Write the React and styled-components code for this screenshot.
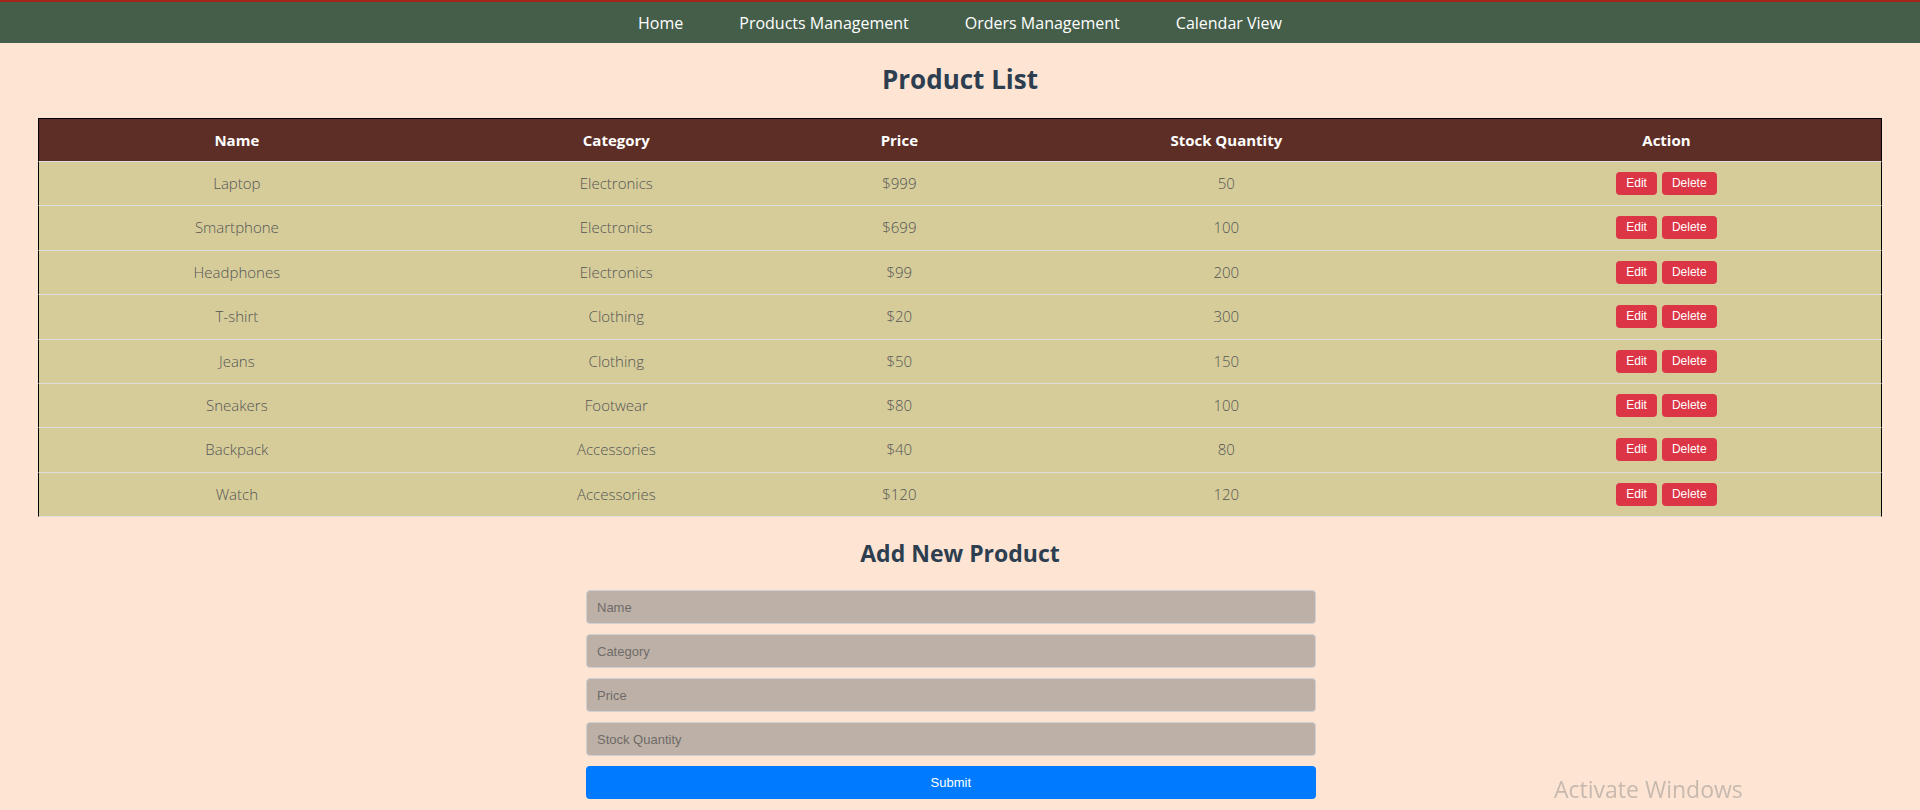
import React, { useState } from 'react';
import styled, { createGlobalStyle } from 'styled-components';

const initialProducts = [
  { id: 1, name: 'Laptop', category: 'Electronics', price: 999, stock: 50 },
  { id: 2, name: 'Smartphone', category: 'Electronics', price: 699, stock: 100 },
  { id: 3, name: 'Headphones', category: 'Electronics', price: 99, stock: 200 },
  { id: 4, name: 'T-shirt', category: 'Clothing', price: 20, stock: 300 },
  { id: 5, name: 'Jeans', category: 'Clothing', price: 50, stock: 150 },
  { id: 6, name: 'Sneakers', category: 'Footwear', price: 80, stock: 100 },
  { id: 7, name: 'Backpack', category: 'Accessories', price: 40, stock: 80 },
  { id: 8, name: 'Watch', category: 'Accessories', price: 120, stock: 120 },
];

const links = ['Home', 'Products Management', 'Orders Management', 'Calendar View'];

const App = () => {
  const [products, setProducts] = useState(initialProducts);
  const [form, setForm] = useState({ name: '', category: '', price: '', stock: '' });

  const onChange = (e) => setForm({ ...form, [e.target.name]: e.target.value });

  const onSubmit = (e) => {
    e.preventDefault();
    if (!form.name) return;
    setProducts([...products, { ...form, id: Date.now() }]);
    setForm({ name: '', category: '', price: '', stock: '' });
  };

  const remove = (id) => setProducts(products.filter((p) => p.id !== id));

  return (
    <>
      <GlobalStyle />
      <Nav>
        {links.map((l) => (
          <NavLink key={l} href="#">
            {l}
          </NavLink>
        ))}
      </Nav>
      <Main>
        <Title>Product List</Title>
        <Table>
          <colgroup>
            <col style={{ width: '21.48%' }} />
            <col style={{ width: '19.75%' }} />
            <col style={{ width: '10.96%' }} />
            <col style={{ width: '24.52%' }} />
            <col />
          </colgroup>
          <thead>
            <tr>
              <Th>Name</Th>
              <Th>Category</Th>
              <Th>Price</Th>
              <Th>Stock Quantity</Th>
              <Th>Action</Th>
            </tr>
          </thead>
          <tbody>
            {products.map((p) => (
              <tr key={p.id}>
                <Td>{p.name}</Td>
                <Td>{p.category}</Td>
                <Td>${p.price}</Td>
                <Td>{p.stock}</Td>
                <Td>
                  <Actions>
                    <SmallButton>Edit</SmallButton>
                    <SmallButton onClick={() => remove(p.id)}>Delete</SmallButton>
                  </Actions>
                </Td>
              </tr>
            ))}
          </tbody>
        </Table>

        <SubTitle>Add New Product</SubTitle>
        <Form onSubmit={onSubmit}>
          <Input name="name" placeholder="Name" value={form.name} onChange={onChange} />
          <Input name="category" placeholder="Category" value={form.category} onChange={onChange} />
          <Input name="price" placeholder="Price" value={form.price} onChange={onChange} />
          <Input name="stock" placeholder="Stock Quantity" value={form.stock} onChange={onChange} />
          <SubmitButton type="submit">Submit</SubmitButton>
        </Form>
      </Main>
      <Watermark>Activate Windows</Watermark>
    </>
  );
};
export default App;

const GlobalStyle = createGlobalStyle`
  body {
    margin: 0;
    background: #fde4d3;
    font-family: 'Open Sans', 'Liberation Sans', sans-serif;
  }
`;

const Nav = styled.nav`
  display: flex;
  justify-content: center;
  align-items: center;
  gap: 56px;
  height: 41px;
  border-top: 2px solid #a3251c;
  background: #455e4a;
`;

const NavLink = styled.a`
  color: #ffffff;
  text-decoration: none;
  font-size: 16px;
  line-height: 20px;
`;

const Main = styled.main`
  display: flex;
  flex-direction: column;
  align-items: center;
  padding-top: 20px;
`;

const Title = styled.h2`
  margin: 0 0 23px;
  font-size: 26px;
  line-height: 32px;
  font-weight: 700;
  color: #2c3e50;
`;

const Table = styled.table`
  width: 96%;
  table-layout: fixed;
  border-collapse: separate;
  border-spacing: 0;
  text-align: center;
`;

const Th = styled.th`
  padding: 10px 8px;
  line-height: 22px;
  font-size: 15px;
  font-weight: 700;
  color: #ffffff;
  background: #5d2e25;
  border-top: 1px solid #000;
  border-bottom: 1px solid #ddd;
  &:first-child {
    border-left: 1px solid #000;
  }
  &:last-child {
    border-right: 1px solid #000;
  }
`;

const Td = styled.td`
  padding: 10px 8px;
  line-height: 23.4px;
  font-size: 15px;
  font-weight: 300;
  color: #555;
  background: #d5cc9a;
  border-bottom: 1px solid #ddd;
  &:first-child {
    border-left: 1px solid #000;
  }
  &:last-child {
    border-right: 1px solid #000;
  }
`;

const Actions = styled.div`
  display: inline-flex;
  gap: 5px;
  vertical-align: top;
`;

const SmallButton = styled.button`
  padding: 5px 10px;
  border: none;
  border-radius: 4px;
  background: #dc3545;
  color: #fff;
  font-family: 'Liberation Sans', Arial, sans-serif;
  font-size: 12px;
  line-height: 13px;
  cursor: pointer;
`;

const SubTitle = styled.h3`
  margin: 22px 0 23px;
  font-size: 23px;
  line-height: 28px;
  font-weight: 700;
  color: #2c3e50;
`;

const Form = styled.form`
  width: 40%;
  display: flex;
  flex-direction: column;
  gap: 10px;
`;

const Input = styled.input`
  box-sizing: border-box;
  width: 95%;
  height: 34px;
  margin-left: 10px;
  padding: 0 10px;
  border: 1px solid #cfcfd4;
  border-radius: 4px;
  background: #bdb1a7;
  font-family: 'Liberation Sans', Arial, sans-serif;
  font-size: 13px;
  color: #333;
  &::placeholder {
    color: #6f6b68;
  }
`;

const SubmitButton = styled.button`
  box-sizing: border-box;
  width: 95%;
  height: 33px;
  margin-left: 10px;
  border: none;
  border-radius: 4px;
  background: #007bff;
  color: #fff;
  font-family: 'Liberation Sans', Arial, sans-serif;
  font-size: 13px;
  cursor: pointer;
`;

const Watermark = styled.div`
  position: fixed;
  left: 1554px;
  top: 774px;
  font-size: 23px;
  line-height: 30px;
  color: rgba(120, 120, 120, 0.4);
  pointer-events: none;
`;
